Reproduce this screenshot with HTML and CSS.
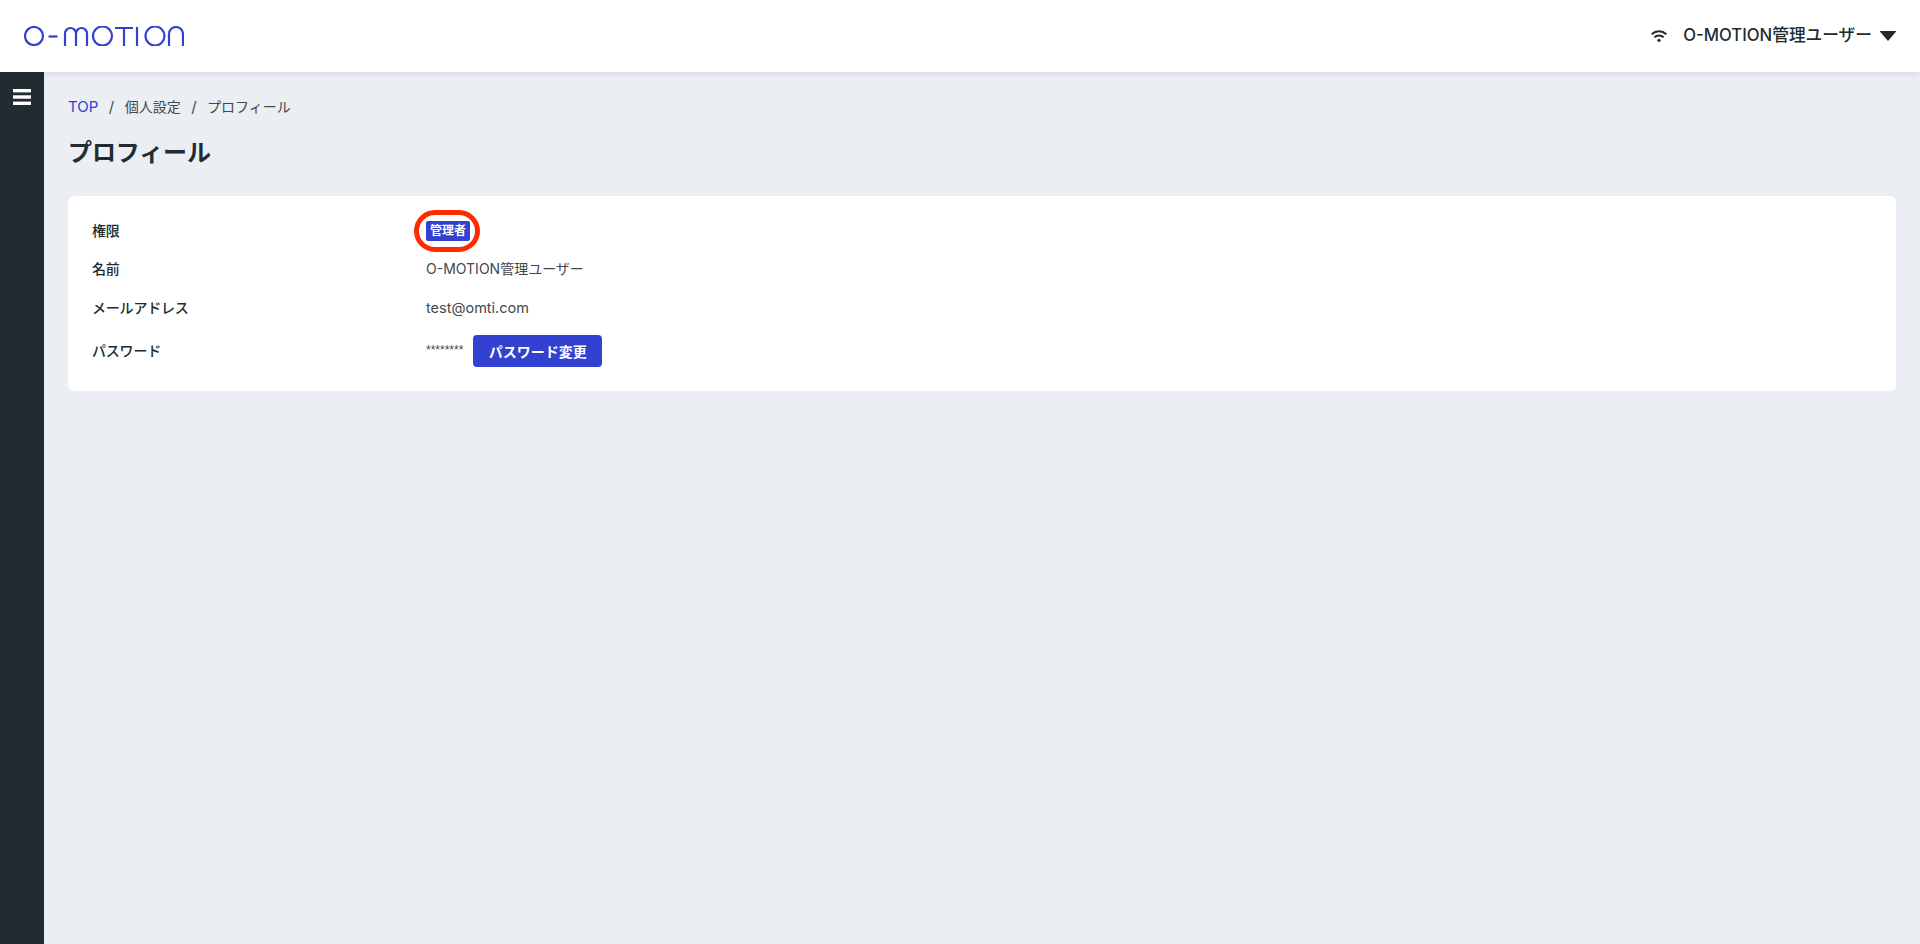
FILE: index.html
```html
<!DOCTYPE html>
<html lang="ja">
<head>
<meta charset="utf-8">
<title>プロフィール</title>
<link rel="stylesheet" href="styles.css">
</head>
<body>
<header class="topbar">
  <svg class="logo" viewBox="0 0 160 20" role="img" aria-label="O-MOTION" fill="none" stroke="#3241d0" stroke-width="2.200">
    <circle cx="10" cy="10" r="9"/>
    <path d="M24.500 10.500h9"/>
    <path d="M41 20V7.500a5.500 5.500 0 0 1 11 0V20M52 7.500a5.500 5.500 0 0 1 11 0V20"/>
    <circle cx="78.500" cy="10" r="9.500"/>
    <path d="M91 2h18M100 2v18"/>
    <path d="M113 1v19"/>
    <circle cx="131" cy="10" r="9.500"/>
    <path d="M145 20V8a7 7 0 0 1 14 0V20"/>
  </svg>
  <div class="user">
    <svg class="wifi" viewBox="0 0 16 12" fill="none" stroke="#212c31" stroke-width="2"><path d="M.7 4.200a10.800 10.800 0 0 1 14.600 0M3.400 7.300a6.600 6.600 0 0 1 9.200 0"/><circle cx="8" cy="10.300" r="1.600" fill="#212c31" stroke="none"/></svg>
    <span class="user-name">O-MOTION管理ユーザー</span>
    <svg class="caret" viewBox="0 0 16 10"><path d="M.5 0h15a.5.5 0 0 1 .4.800L8 10 .1.800A.5.5 0 0 1 .5 0z" fill="#212c31"/></svg>
  </div>
</header>
<div class="body">
  <aside class="sidebar">
    <svg class="menu" viewBox="0 0 18 16" fill="#fff"><rect width="18" height="3.400" y="0"/><rect width="18" height="3.400" y="6.300"/><rect width="18" height="3.400" y="12.600"/></svg>
  </aside>
  <main class="content">
    <nav class="crumbs"><a class="crumb-link">TOP</a><span class="sep">/</span><span>個人設定</span><span class="sep">/</span><span>プロフィール</span></nav>
    <h1 class="title">プロフィール</h1>
    <section class="card">
      <div class="row"><div class="label">権限</div><div class="value"><span class="badge">管理者</span></div></div>
      <div class="row"><div class="label">名前</div><div class="value">O-MOTION管理ユーザー</div></div>
      <div class="row"><div class="label">メールアドレス</div><div class="value value-email">test@omti.com</div></div>
      <div class="row"><div class="label">パスワード</div><div class="value value-pass"><span class="mask">********</span><button class="btn">パスワード変更</button></div></div>
    </section>
  </main>
</div>
</body>
</html>
```
FILE: styles.css
```css
* { box-sizing: border-box; }
html, body { margin: 0; height: 100%; }
body {
  font-family: Inter, "Noto Sans CJK JP", sans-serif;
  color: #212c31;
  background: #ebeef2;
  font-size: 14px;
  display: flex;
  flex-direction: column;
  height: 944px;
  overflow: hidden;
}
.topbar {
  height: 72px;
  flex: none;
  background: #fff;
  box-shadow: 0 1px 6px rgba(33, 44, 49, .12);
  display: flex;
  align-items: center;
  justify-content: space-between;
  padding: 0 24px;
  position: relative;
}
.logo { width: 160px; height: 20px; display: block; }
.user { display: flex; align-items: center; }
.wifi { width: 16px; height: 12px; margin-right: 16px; }
.user-name { font-size: 16.700px; font-weight: 500; line-height: 24px; margin-top: -2px; }
.caret { width: 16px; height: 10px; margin-left: 8px; }
.body { flex: 1; display: flex; min-height: 0; }
.sidebar { width: 44px; flex: none; background: #212c31; display: flex; justify-content: center; align-items: flex-start; padding-top: 17px; }
.menu { width: 18px; height: 16px; }
.content { flex: 1; padding: 25px 24px 0; min-width: 0; }
.crumbs { display: flex; align-items: center; font-size: 14px; line-height: 20px; color: #42494e; }
.crumb-link { color: #3241d0; font-size: 15px; }
.sep { margin: 0 10.500px; font-size: 15px; }
.title { margin: 20px 0 0; font-size: 24px; line-height: 32px; font-weight: 700; letter-spacing: -.1px; }
.card {
  margin-top: 27px;
  background: #fff;
  border-radius: 6px;
  padding: 24px;
  display: flex;
  flex-direction: column;
  gap: 16px;
}
.row { display: flex; align-items: center; line-height: 22.400px; }
.label { width: 334px; flex: none; font-weight: 500; letter-spacing: -.2px; }
.value { color: #42494e; display: flex; align-items: center; }
.value-email { font-size: 14.500px; }
.badge {
  position: relative;
  background: #3241d0;
  color: #fff;
  font-size: 12px;
  font-weight: 700;
  line-height: 20px;
  padding: 0 4px;
  border-radius: 2px;
  white-space: nowrap;
}
.badge::after {
  content: "";
  position: absolute;
  inset: -11px -10px -11px -12px;
  border: 5px solid #ff2a00;
  border-radius: 21px;
}
.value-pass { gap: 10px; }
.mask { font: 12px "Liberation Sans", sans-serif; margin-top: -3px; }
.btn {
  background: #3241d0;
  color: #fff;
  border: 0;
  border-radius: 4px;
  height: 32px;
  width: 129px;
  font: 700 14px Inter, "Noto Sans CJK JP", sans-serif;
  padding: 0;
}
```
